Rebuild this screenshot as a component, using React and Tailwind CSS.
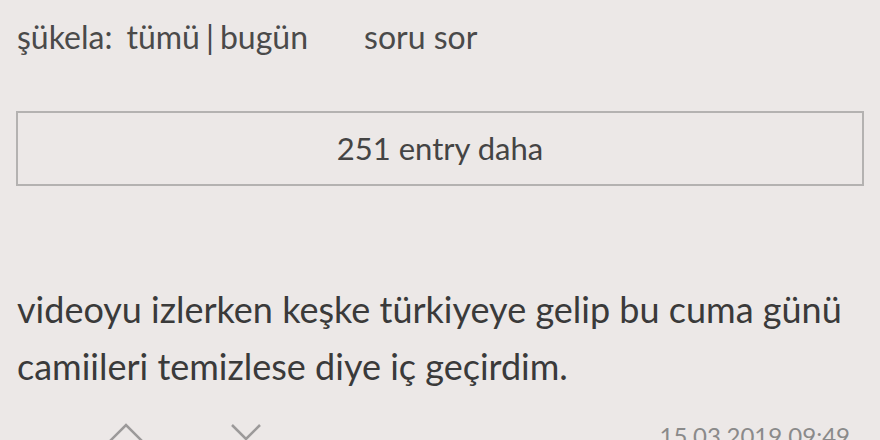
import React from 'react';

const Chevron = ({ dir }) => (
  <svg width="40" height="24" viewBox="0 0 40 24" fill="none" stroke="#9c9a9a" strokeWidth="2.5">
    {dir === 'up' ? <path d="M4 22 L20 6 L36 22" /> : <path d="M6 6 L20 20 L34 6" />}
  </svg>
);

const App = () => {
  return (
    <div className="w-[880px] h-[440px] overflow-hidden bg-[#ece8e7] text-[#3f3f3f]" style={{ fontFamily: 'Lato, "Open Sans", sans-serif' }}>
      {/* top bar */}
      <div className="flex items-center pl-[17px] pt-[19px] text-[32px] leading-[36px] text-[#4a4a4a]">
        <span>şükela:</span>
        <span className="ml-[14px]">tümü</span>
        <span className="mx-[6px]">|</span>
        <span>bugün</span>
        <span className="ml-[56px]">soru sor</span>
      </div>

      {/* more entries */}
      <div className="mx-[16px] mt-[56px] h-[75px] border-2 border-[#b4b2b1] flex items-center justify-center text-[31px] text-[#444]">
        251 entry daha
      </div>

      {/* entry */}
      <p className="pl-[17px] mt-[95px] text-[36px] leading-[57px] text-[#3a3a3a]">
        videoyu izlerken keşke türkiyeye gelip bu cuma günü
        <br />
        camiileri temizlese diye iç geçirdim.
      </p>

      <div className="flex items-start pt-[24px] pr-[30px]">
        <div className="ml-[106px]"><Chevron dir="up" /></div>
        <div className="ml-[80px]"><Chevron dir="down" /></div>
        <span className="ml-auto pt-[4px] text-[24px] leading-[26px] text-[#8a8a8a]">15.03.2019 09:49</span>
      </div>
    </div>
  );
};

export default App;
